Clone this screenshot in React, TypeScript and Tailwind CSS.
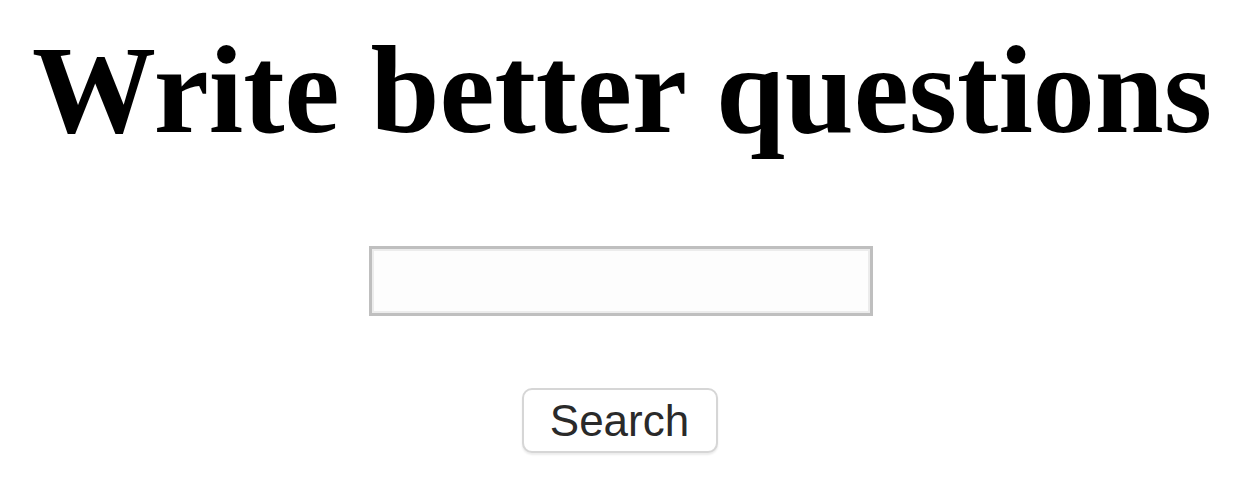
export default function App() {
  return (
    <div className="flex min-h-[480px] w-full flex-col items-center bg-white">
      <h1 className="mt-[20px] whitespace-nowrap text-center text-[124px] font-bold leading-[142px] text-black [font-family:'Liberation_Serif','Times_New_Roman',serif]">
        Write better questions
      </h1>
      <input
        type="text"
        aria-label="Search"
        className="mt-[84px] mr-[2px] box-border h-[70px] w-[504px] border-[3px] border-[#bfbfbf] bg-[#fdfdfd] shadow-[inset_0_0_0_2px_#ececec] outline-none"
      />
      <button
        type="button"
        className="mt-[72px] mr-[5px] box-border flex h-[65px] w-[196px] items-center justify-center rounded-[10px] border-2 border-[#d6d6d6] bg-white text-[44px] leading-none text-[#2a2a2a] shadow-[0_2px_2px_rgba(0,0,0,0.08)] [font-family:'Liberation_Sans',Arial,sans-serif]"
      >
        Search
      </button>
    </div>
  );
}
